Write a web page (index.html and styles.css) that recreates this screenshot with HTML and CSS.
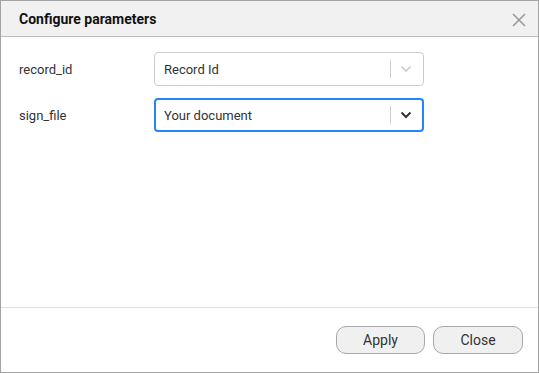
FILE: index.html
```html
<!DOCTYPE html>
<html>
<head>
<meta charset="utf-8">
<link rel="stylesheet" href="styles.css">
</head>
<body>
<div class="dialog">
  <div class="header">
    <span class="title">Configure parameters</span>
    <svg class="close-x" width="14" height="14" viewBox="0 0 14 14"><path d="M1 1L13 13M13 1L1 13" stroke="#9a9a9a" stroke-width="1.6" fill="none"/></svg>
  </div>
  <div class="body">
    <div class="row">
      <label class="label">record_id</label>
      <div class="select">
        <span class="value">Record Id</span>
        <span class="sep"></span>
        <svg class="chev" width="12" height="8" viewBox="0 0 12 8"><path d="M1.5 1.5L6 6L10.5 1.5" stroke="#cccccc" stroke-width="1.6" fill="none"/></svg>
      </div>
    </div>
    <div class="row">
      <label class="label">sign_file</label>
      <div class="select focused">
        <span class="value">Your document</span>
        <span class="sep"></span>
        <svg class="chev" width="12" height="8" viewBox="0 0 12 8"><path d="M1.5 1.5L6 6L10.5 1.5" stroke="#333333" stroke-width="2" fill="none"/></svg>
      </div>
    </div>
  </div>
  <div class="footer">
    <button class="btn">Apply</button>
    <button class="btn">Close</button>
  </div>
</div>
</body>
</html>
```
FILE: styles.css
```css
html, body {
  margin: 0;
  padding: 0;
  background: #ffffff;
}
.dialog {
  width: 539px;
  height: 373px;
  box-sizing: border-box;
  border: 1px solid #a3a3a3;
  display: flex;
  flex-direction: column;
  font-family: Roboto, "Liberation Sans", sans-serif;
  color: #333333;
  background: #ffffff;
}
.header {
  height: 35px;
  flex: 0 0 auto;
  background: #f1f1f1;
  border-bottom: 1px solid #bdbdbd;
  display: flex;
  align-items: center;
  justify-content: space-between;
  padding: 0 12px 0 18px;
}
.title {
  font-size: 14px;
  font-weight: 700;
  color: #111111;
}
.close-x {
  display: block;
  margin-top: 2px;
}
.body {
  flex: 1 1 auto;
  padding: 15px 18px 0 18px;
  display: flex;
  flex-direction: column;
  gap: 12px;
}
.row {
  display: flex;
  align-items: center;
}
.label {
  width: 135px;
  font-size: 13px;
  color: #333333;
}
.select {
  width: 270px;
  height: 34px;
  box-sizing: border-box;
  border: 1px solid #cccccc;
  border-radius: 4px;
  display: flex;
  align-items: center;
  padding-left: 9px;
}
.select.focused {
  border: 2px solid #2684ff;
  padding-left: 8px;
}
.value {
  flex: 1;
  font-size: 13px;
  color: #333333;
}
.sep {
  width: 1px;
  height: 18px;
  background: #cccccc;
}
.chev {
  display: block;
  margin: 0 11px 0 9px;
}
.select.focused .chev {
  margin-right: 10px;
}
.footer {
  flex: 0 0 auto;
  height: 46px;
  border-top: 1px solid #dddddd;
  display: flex;
  justify-content: flex-end;
  align-items: flex-start;
  gap: 8px;
  padding: 18px 15px 0 0;
}
.btn {
  height: 28px;
  width: 89px;
  border: 1px solid #a8a8a8;
  border-radius: 10px;
  background: #f0f0f0;
  font-family: Roboto, "Liberation Sans", sans-serif;
  font-size: 14px;
  color: #333333;
  padding: 0;
}
.btn + .btn {
  width: 90px;
}
```
